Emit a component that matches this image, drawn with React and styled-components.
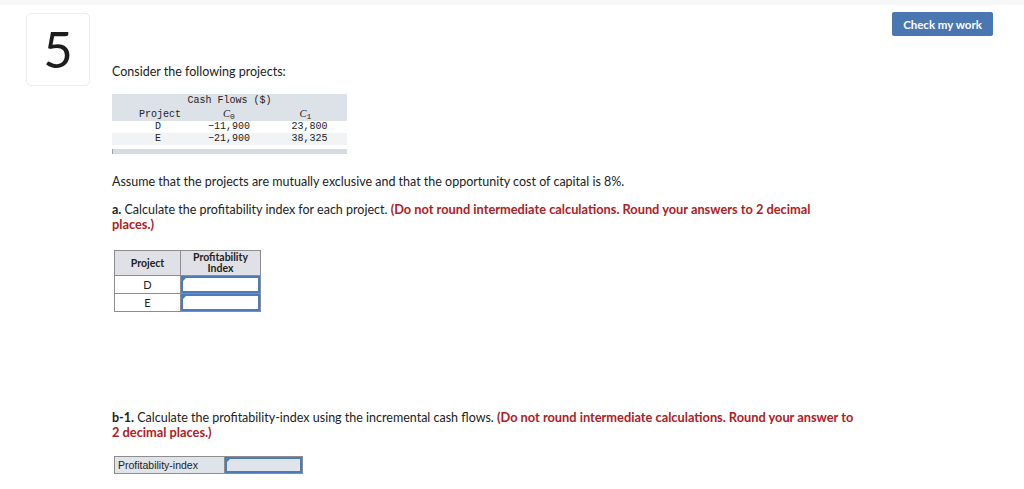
import React from 'react'
import styled, { createGlobalStyle } from 'styled-components'

const GlobalStyle = createGlobalStyle`
  body {
    margin: 0;
    background: #fff;
    font-family: Lato, "Open Sans", sans-serif;
    color: #222;
  }
`

const cashRows = [
  { id: 'D', c0: '\u221211,900', c1: '23,800' },
  { id: 'E', c0: '\u221221,900', c1: '38,325' },
]

const App = () => {
  return (
    <>
      <GlobalStyle />
      <TopStrip />
      <Page>
        <NumberBox>5</NumberBox>
        <Content>
          <Intro>Consider the following projects:</Intro>

          <CashTable>
            <colgroup>
              <col style={{ width: 92 }} />
              <col style={{ width: 50 }} />
              <col style={{ width: 93 }} />
            </colgroup>
            <thead>
              <tr>
                <CashHead colSpan={3}>Cash Flows ($)</CashHead>
              </tr>
              <tr>
                <CashHead $pad={4}>Project</CashHead>
                <CashHead>
                  <i>C</i>
                  <sub>0</sub>
                </CashHead>
                <CashHead $pad={10}>
                  <i>C</i>
                  <sub>1</sub>
                </CashHead>
              </tr>
            </thead>
            <tbody>
              {cashRows.map((row, i) => (
                <CashRow key={row.id} $alt={i % 2 === 1}>
                  <CashCell $pad={0}>{row.id}</CashCell>
                  <CashCell>{row.c0}</CashCell>
                  <CashCell $pad={18}>{row.c1}</CashCell>
                </CashRow>
              ))}
            </tbody>
          </CashTable>
          <TableFoot />

          <Para $top={21}>
            Assume that the projects are mutually exclusive and that the opportunity cost of capital is 8%.
          </Para>

          <Para $top={13}>
            <b>a.</b> Calculate the profitability index for each project.{' '}
            <Warn>(Do not round intermediate calculations. Round your answers to 2 decimal places.)</Warn>
          </Para>

          <AnswerTable>
            <thead>
              <tr>
                <AnswerHead $w={65}>Project</AnswerHead>
                <AnswerHead $w={79}>
                  Profitability
                  <br />
                  Index
                </AnswerHead>
              </tr>
            </thead>
            <tbody>
              {['D', 'E'].map(p => (
                <tr key={p}>
                  <AnswerLabel>{p}</AnswerLabel>
                  <InputCell>
                    <Input />
                  </InputCell>
                </tr>
              ))}
            </tbody>
          </AnswerTable>

          <Para $top={98}>
            <b>b-1.</b> Calculate the profitability-index using the incremental cash flows.{' '}
            <Warn>(Do not round intermediate calculations. Round your answer to 2 decimal places.)</Warn>
          </Para>

          <SingleRow>
            <SingleLabel>Profitability-index</SingleLabel>
            <SingleInput />
          </SingleRow>
        </Content>
        <CheckButton>Check my work</CheckButton>
      </Page>
    </>
  )
}

export default App

const TopStrip = styled.div`
  height: 5px;
  background: #f7f7f8;
`

const Page = styled.div`
  display: flex;
  align-items: flex-start;
  padding: 8px 31px 0 26px;
`

const NumberBox = styled.div`
  box-sizing: border-box;
  width: 64px;
  height: 73px;
  flex-shrink: 0;
  border: 1px solid #ececec;
  border-radius: 5px;
  display: flex;
  align-items: center;
  justify-content: center;
  font-size: 51px;
  font-weight: 400;
  color: #1d1d1d;
  padding-bottom: 2px;
`

const Content = styled.div`
  flex: 1;
  padding-left: 22px;
  padding-top: 50px;
`

const Intro = styled.p`
  margin: 0;
  font-size: 12.5px;
  line-height: 18px;
`

const CashTable = styled.table`
  margin-top: 13px;
  border-collapse: collapse;
  table-layout: fixed;
  width: 235px;
  font-family: "Liberation Mono", "DejaVu Sans Mono", monospace;
  font-size: 10px;
  color: #222;
`

const CashHead = styled.th`
  background: #dde1e8;
  font-weight: 400;
  text-align: center;
  padding: 0 0 0 ${props => props.$pad || 0}px;
  height: 13px;
  line-height: 13px;

  i {
    font-family: "Liberation Serif", serif;
    font-size: 10.5px;
  }

  sub {
    font-size: 8px;
    vertical-align: -2px;
    line-height: 0;
  }
`

const CashRow = styled.tr`
  background: ${props => (props.$alt ? '#f2f3f5' : '#fff')};
`

const CashCell = styled.td`
  text-align: center;
  padding: 0 0 0 ${props => props.$pad || 0}px;
  height: 12px;
  line-height: 12px;
`

const TableFoot = styled.div`
  width: 235px;
  height: 5px;
  margin-top: 4px;
  background: #d7dce4;
  border-left: 1px solid #9aa3ad;
  box-sizing: border-box;
`

const Para = styled.p`
  margin: ${props => props.$top}px 0 0;
  font-size: 12.5px;
  line-height: 14px;
  max-width: 742px;

  b {
    font-weight: 700;
  }
`

const Warn = styled.span`
  color: #b0201f;
  font-weight: 700;
  font-size: 12.8px;
  line-height: 14px;
`

const AnswerTable = styled.table`
  margin: 18px 0 0 2px;
  border-collapse: collapse;
  font-size: 11px;
`

const AnswerHead = styled.th`
  width: ${props => props.$w}px;
  height: 24px;
  padding: 0;
  background: #dfe1e6;
  border: 1px solid #8d8d8d;
  font-weight: 700;
  font-size: 10.5px;
  line-height: 11px;
  text-align: center;
`

const AnswerLabel = styled.td`
  height: 17px;
  padding: 0;
  border: 1px solid #8d8d8d;
  text-align: center;
  font-size: 11px;
`

const InputCell = styled.td`
  padding: 0;
  border: 1px solid #8d8d8d;
  height: 17px;
`

const Input = styled.div`
  position: relative;
  box-sizing: border-box;
  height: 17px;
  border: 2px solid #4a7bbd;
  background: #fff;

  &::before {
    content: '';
    position: absolute;
    left: 0;
    top: 0;
    border-top: 3px solid #4a7bbd;
    border-right: 3px solid transparent;
  }
`

const SingleRow = styled.div`
  display: flex;
  margin: 16px 0 0 2px;
  width: 189px;
  height: 18px;
  border: 1px solid #8d8d8d;
  box-sizing: border-box;
`

const SingleLabel = styled.div`
  width: 110px;
  background: #dfe3ea;
  border-right: 1px solid #8d8d8d;
  font-size: 10.5px;
  font-family: "Liberation Sans", Arial, sans-serif;
  line-height: 16px;
  padding-left: 3px;
  box-sizing: border-box;
`

const SingleInput = styled.div`
  position: relative;
  flex: 1;
  background: #dfe3ea;
  border: 2px solid #4a7bbd;

  &::before {
    content: '';
    position: absolute;
    left: 0;
    top: 0;
    border-top: 3px solid #4a7bbd;
    border-right: 3px solid transparent;
  }
`

const CheckButton = styled.button`
  flex-shrink: 0;
  width: 101px;
  height: 24px;
  margin-top: -1px;
  background: #4a76b2;
  border: none;
  border-radius: 2px;
  color: #fff;
  font-family: Lato, sans-serif;
  font-weight: 700;
  font-size: 11.5px;
`
